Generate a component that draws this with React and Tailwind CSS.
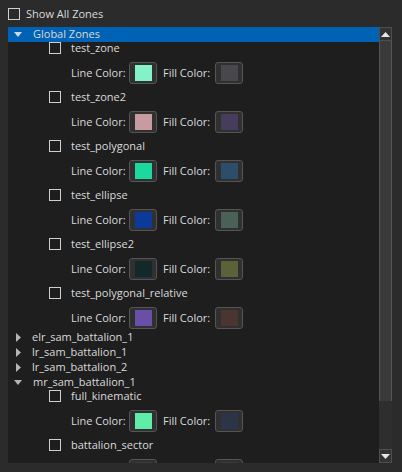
import React from "react";

const globalZones = [
  { name: "test_zone", line: "#84f2c8", fill: "#48484c" },
  { name: "test_zone2", line: "#c89ba0", fill: "#463c5c" },
  { name: "test_polygonal", line: "#1cd8a0", fill: "#2c4e6a" },
  { name: "test_ellipse", line: "#0b3a9a", fill: "#4a6158" },
  { name: "test_ellipse2", line: "#132828", fill: "#5c6238" },
  { name: "test_polygonal_relative", line: "#6a4fa8", fill: "#4a3530" },
];

const mrZones = [
  { name: "full_kinematic", line: "#5eeeaa", fill: "#2c3448" },
  { name: "battalion_sector", line: "#3a3a3a", fill: "#3a3a3a", clipped: true },
];

function Check() {
  return <div className="w-[12px] h-[12px] border border-[#cfcfcf] shrink-0" />;
}

function Swatch({ color }) {
  return (
    <div className="w-[28px] h-[22px] border border-[#545454] rounded-[3px] bg-[#303030] flex items-center justify-center shrink-0">
      <div className="w-[17px] h-[16px]" style={{ backgroundColor: color }} />
    </div>
  );
}

function Zone({ z, last }) {
  return (
    <div className="flex flex-col">
      <div className="h-[14px] flex items-start pl-[41px]">
        <Check />
        <span className="ml-[10px] leading-[12px] whitespace-nowrap">{z.name}</span>
      </div>
      <div className={(last ? "h-[29px]" : "h-[35px]") + " pt-[6px] pl-[63px] flex items-start"}>
        <div className="h-[22px] flex items-center">
          <span className={"w-[58px] whitespace-nowrap " + (z.clipped ? "invisible" : "")}>Line Color:</span>
          <Swatch color={z.line} />
          <span className={"ml-[6px] w-[52px] whitespace-nowrap " + (z.clipped ? "invisible" : "")}>Fill Color:</span>
          <Swatch color={z.fill} />
        </div>
      </div>
    </div>
  );
}

function Collapsed({ name }) {
  return (
    <div className="h-[15px] flex items-center">
      <svg width="24" height="15" className="shrink-0">
        <polygon points="8,3 13,7.5 8,12" fill="#b4b4b4" />
      </svg>
      <span className="whitespace-nowrap">{name}</span>
    </div>
  );
}

function Expanded({ name, selected }) {
  return (
    <div className={"h-[15px] flex items-center " + (selected ? "bg-[#0062b4]" : "")}>
      <svg width="25" height="15" className="shrink-0">
        <polygon points="6,5 14,5 10,10" fill={selected ? "#cdd9e6" : "#b4b4b4"} />
      </svg>
      <span className="whitespace-nowrap">{name}</span>
    </div>
  );
}

export default function App() {
  return (
    <div
      className="w-[402px] h-[472px] bg-[#2b2b2b] text-[#dadada] text-[11px] overflow-hidden"
      style={{ fontFamily: '"Open Sans", "Noto Sans", sans-serif' }}
    >
      <div className="h-[27px] pt-[8px] pl-[8px] flex items-start">
        <Check />
        <span className="ml-[6px] leading-[12px]">Show All Zones</span>
      </div>
      <div className="ml-[8px] w-[384px] h-[436px] bg-[#1e1e1f] flex overflow-hidden">
        <div className="w-[371px] flex flex-col overflow-hidden">
          <Expanded name="Global Zones" selected />
          {globalZones.map((z, i) => (
            <Zone key={z.name} z={z} last={i === globalZones.length - 1} />
          ))}
          <Collapsed name="elr_sam_battalion_1" />
          <Collapsed name="lr_sam_battalion_1" />
          <Collapsed name="lr_sam_battalion_2" />
          <Expanded name="mr_sam_battalion_1" />
          {mrZones.map((z) => (
            <Zone key={z.name} z={z} />
          ))}
        </div>
        <div className="w-[13px] flex flex-col">
          <div className="h-[14px] border border-[#4e4e4e] bg-[#333333] flex items-center justify-center">
            <svg width="9" height="5">
              <polygon points="0,5 9,5 4.5,0" fill="#e6e6e6" />
            </svg>
          </div>
          <div className="h-[360px] border-x border-[#555555] bg-[#3a3a3a]" />
          <div className="flex-1 bg-[#2e2e2e]" />
          <div className="h-[14px] border border-[#4e4e4e] bg-[#333333] flex items-center justify-center">
            <svg width="9" height="5">
              <polygon points="0,0 9,0 4.5,5" fill="#e6e6e6" />
            </svg>
          </div>
        </div>
      </div>
    </div>
  );
}
